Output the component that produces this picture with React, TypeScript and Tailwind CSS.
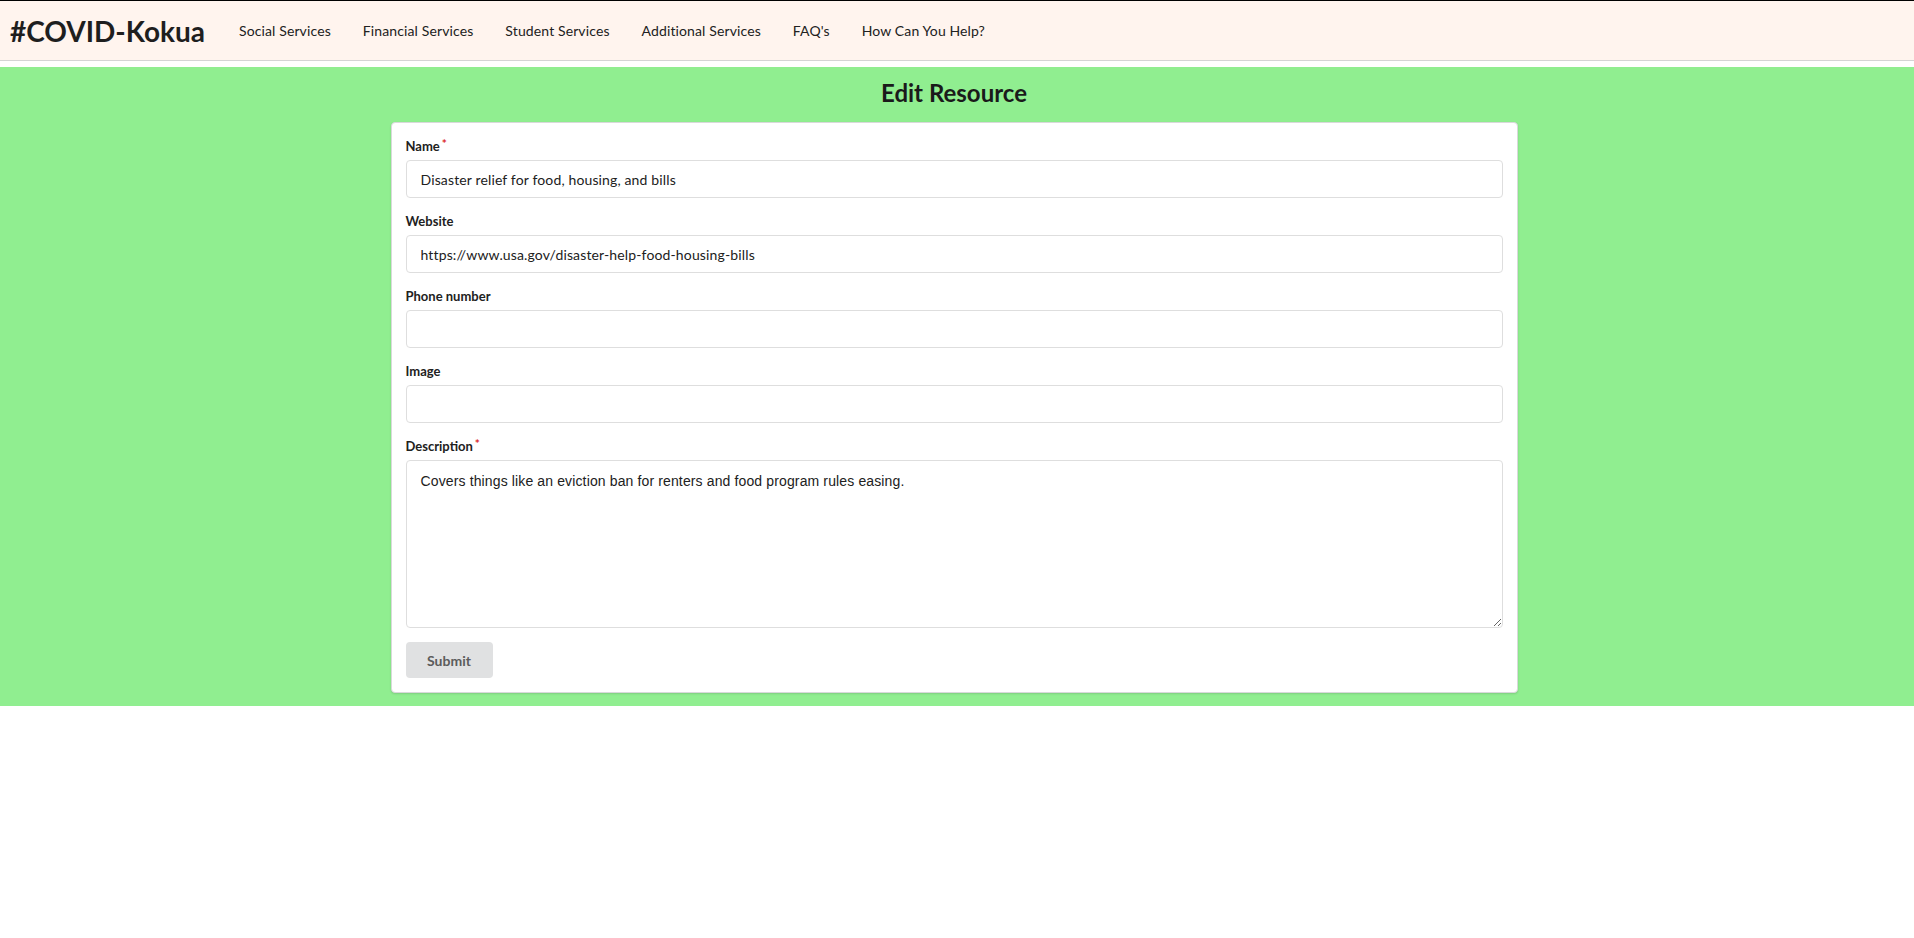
import React from "react";

const NAV_ITEMS = [
  "Social Services",
  "Financial Services",
  "Student Services",
  "Additional Services",
  "FAQ's",
  "How Can You Help?",
];

const lato = { fontFamily: "Lato, 'Helvetica Neue', Arial, sans-serif" };

function Req() {
  return (
    <span className="relative top-[-3px] ml-[2px] text-[12px] text-[#db2828]">
      *
    </span>
  );
}

function Field({
  label,
  required,
  value,
}: {
  label: string;
  required?: boolean;
  value?: string;
}) {
  return (
    <div className="mb-[14px]">
      <label className="mb-[4px] block text-[13px] leading-[19px] font-bold text-[#212121]">
        {label}
        {required ? <Req /> : null}
      </label>
      <input
        type="text"
        defaultValue={value}
        className="block h-[38px] w-full rounded-[4px] border border-[#dedede] bg-white px-[14px] text-[14px] tracking-[0.14px] text-[#212121] outline-none"
        style={lato}
      />
    </div>
  );
}

export default function App() {
  return (
    <div className="min-h-[938px] bg-white text-[#212121]" style={lato}>
      <header className="flex h-[61px] items-center border-t border-b border-t-black border-b-[#d4d4d5] bg-[#fff4ee]">
        <span className="pl-[10px] pr-[18px] text-[28px] leading-none font-bold text-[#1e1e1e]">
          #COVID-Kokua
        </span>
        <nav className="flex">
          {NAV_ITEMS.map((item) => (
            <a
              key={item}
              className="px-4 text-[14px] leading-[20px] tracking-[0.12px] text-[#212121]"
            >
              {item}
            </a>
          ))}
        </nav>
      </header>

      <main className="mt-[6px] bg-[#90ee90] pt-[10px] pr-[6px] pb-[13px]">
        <h2 className="mb-[14px] text-center text-[24px] leading-[31px] font-bold text-[#1a1a1a]">
          Edit Resource
        </h2>
        <div className="mx-auto w-[1127px] rounded-[4px] border border-[#d9d9da] bg-white px-[14px] pt-[14px] pb-[14px] shadow-[0_1px_2px_0_rgba(34,36,38,0.15)]">
          <Field
            label="Name"
            required
            value="Disaster relief for food, housing, and bills"
          />
          <Field
            label="Website"
            value="https://www.usa.gov/disaster-help-food-housing-bills"
          />
          <Field label="Phone number" />
          <Field label="Image" />
          <div className="mb-[14px]">
            <label className="mb-[4px] block text-[13px] leading-[19px] font-bold text-[#212121]">
              Description
              <Req />
            </label>
            <textarea
              defaultValue="Covers things like an eviction ban for renters and food program rules easing."
              className="block h-[168px] w-full rounded-[4px] border border-[#dedede] bg-white px-[14px] py-[11px] text-[14px] leading-[18px] tracking-[0.13px] text-[#212121] outline-none"
              style={{ fontFamily: "'Liberation Sans', Arial, sans-serif" }}
            />
          </div>
          <button
            type="button"
            className="h-[36px] w-[87px] rounded-[4px] bg-[#e0e1e2] text-[14px] font-bold text-[#5c5c5c]"
          >
            Submit
          </button>
        </div>
      </main>
    </div>
  );
}
